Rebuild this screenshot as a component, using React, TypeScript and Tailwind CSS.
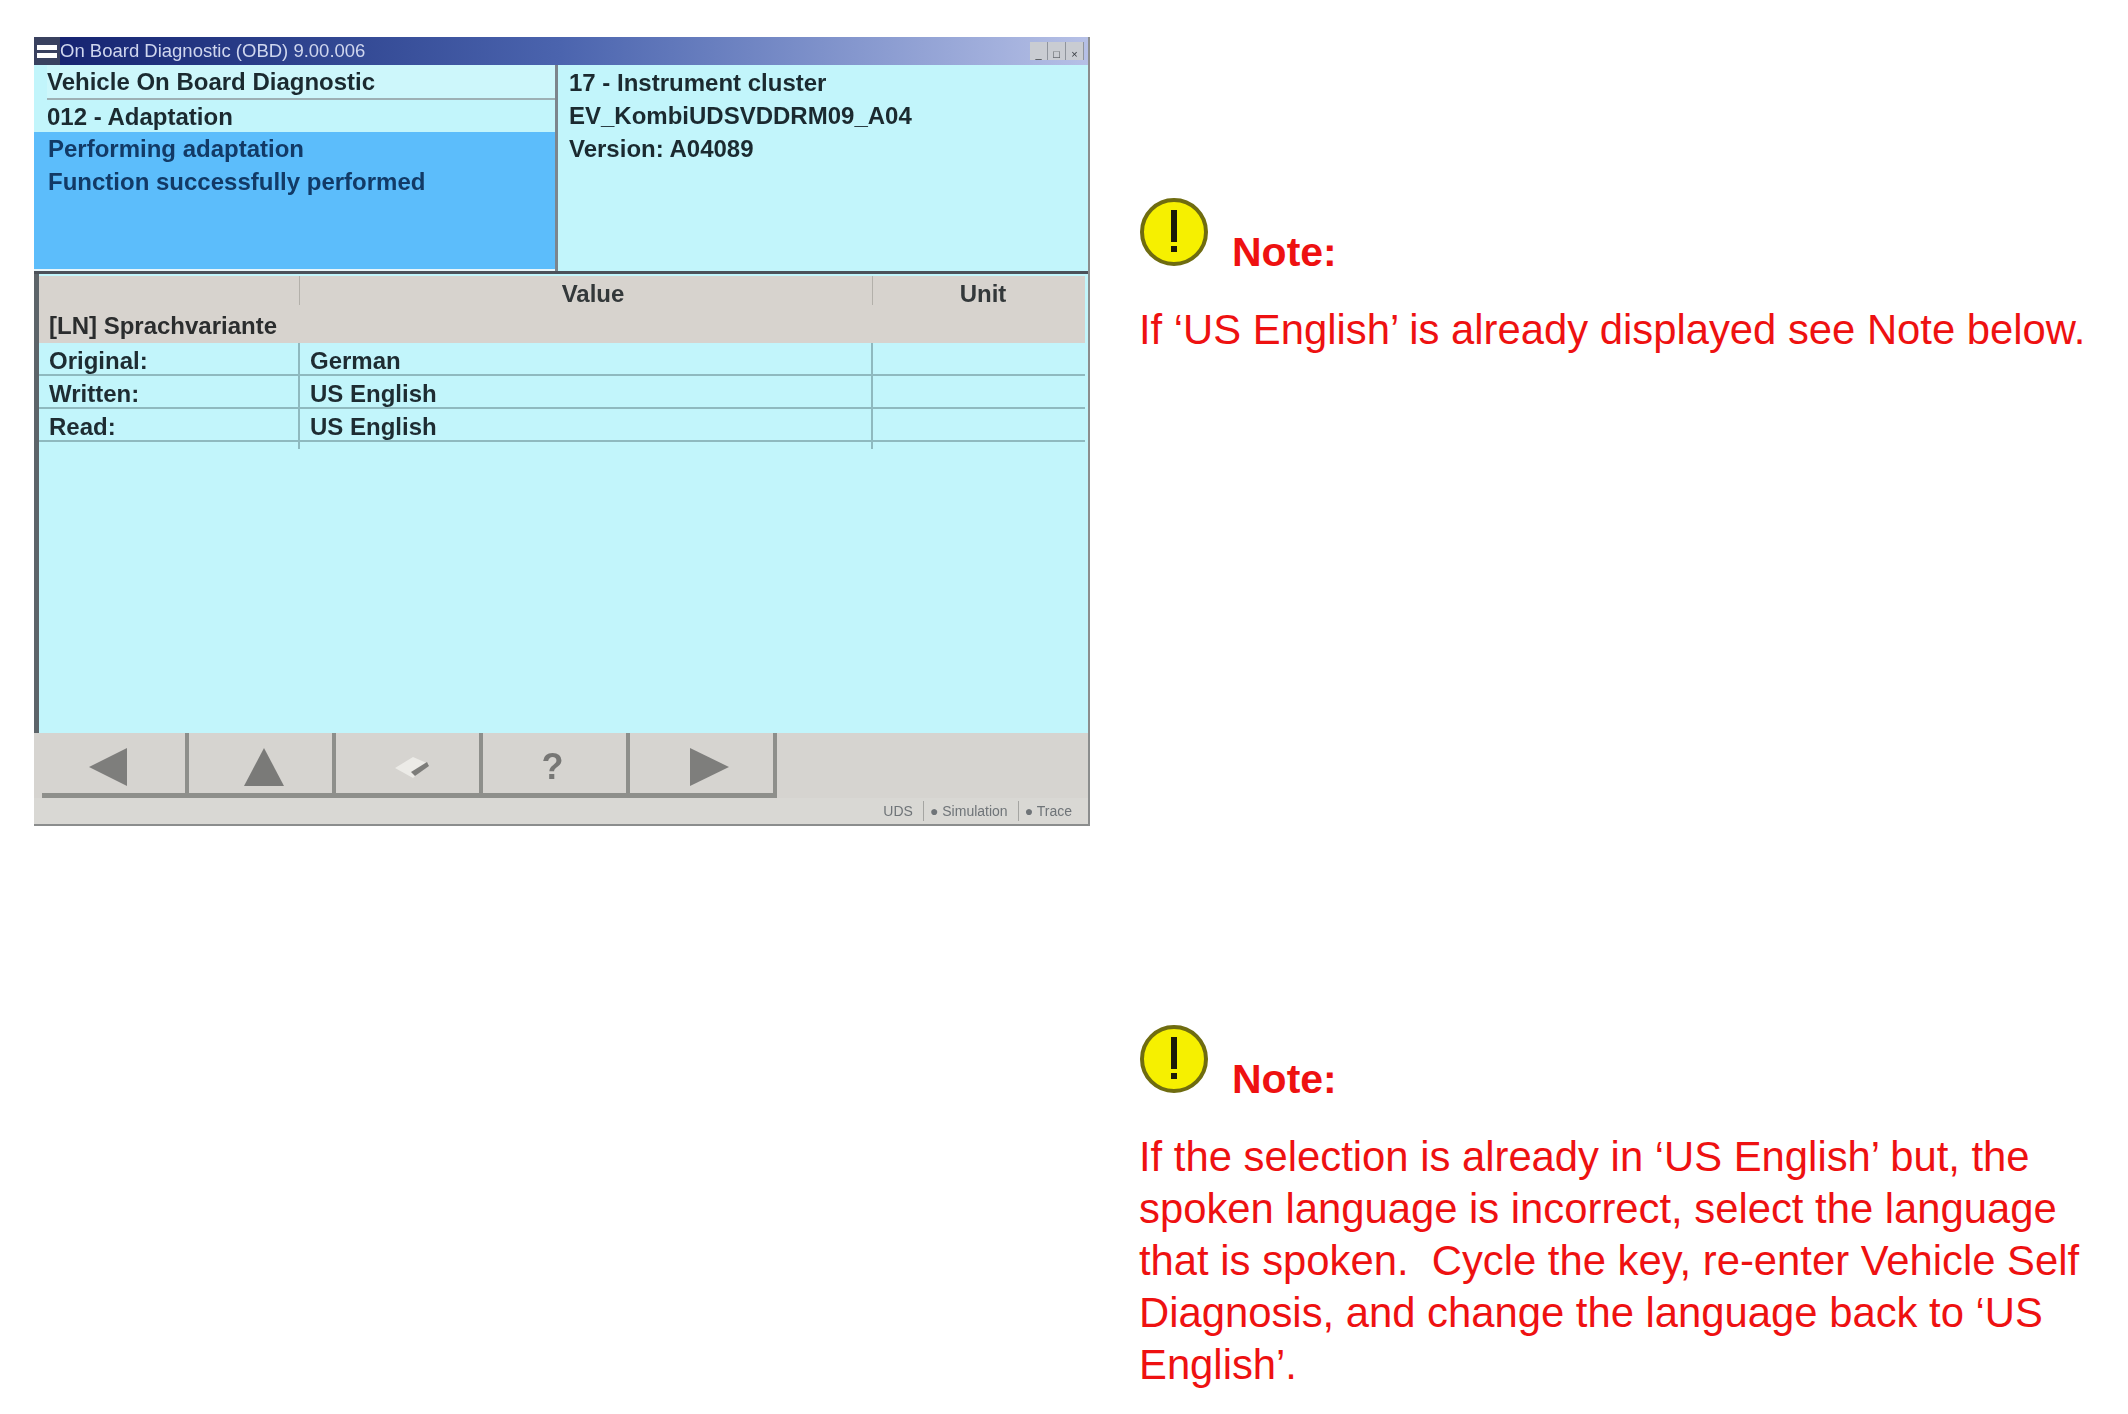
import { ReactNode } from "react";

const FONT = "font-['Liberation_Sans',Arial,sans-serif]";

const ROWS = [
  { label: "Original:", value: "German" },
  { label: "Written:", value: "US English" },
  { label: "Read:", value: "US English" },
];

function TitleButton({ children }: { children: ReactNode }) {
  return (
    <div className="flex h-[18px] w-[18px] items-end justify-center border-r border-[#8f949c] bg-[#c9ccd2] text-[11px] leading-none text-[#34383e]">
      {children}
    </div>
  );
}

function ToolButton({ children }: { children: ReactNode }) {
  return (
    <div className="flex h-[60px] w-[147px] items-center justify-center border-r-[4px] border-[#8e8f8b] bg-[#d6d4d0] pt-[8px]">
      {children}
    </div>
  );
}

/** Scanned OBD window, the soft edges come from the jpeg in the original */
function ObdWindow() {
  return (
    <div className="flex h-[789px] w-[1056px] shrink-0 flex-col border-r-2 border-b-2 border-[#8b8d8d] blur-[0.7px]">
      {/* Title bar */}
      <div className="flex h-[28px] shrink-0 items-center bg-gradient-to-r from-[#14206e] via-[#4b64ae] to-[#b6c0e6] pr-1">
        <div className="flex h-full w-[26px] flex-col justify-center gap-[3px] bg-[#39415f] px-[3px]">
          <div className="h-[5px] bg-white" />
          <div className="h-[5px] bg-white" />
        </div>
        <span className="text-[18.5px] text-[#cfd6ee]">On Board Diagnostic (OBD) 9.00.006</span>
        <div className="ml-auto flex">
          <TitleButton>_</TitleButton>
          <TitleButton>□</TitleButton>
          <TitleButton>×</TitleButton>
        </div>
      </div>

      {/* Top panes */}
      <div className="flex h-[209px] shrink-0 border-b-[3px] border-[#4c5159] bg-[#c2f5fb] text-[24px] leading-[33px] font-bold text-[#1b2a30]">
        <div className="flex w-[524px] shrink-0 flex-col border-r-[3px] border-[#7c858c] pl-[13px]">
          <div className="flex h-[35px] items-end border-b-2 border-[#9db0b4] bg-[#cdf7fb]">Vehicle On Board Diagnostic</div>
          <div className="flex h-[32px] items-center">012 - Adaptation</div>
          <div className="-ml-[13px] flex-1 bg-[#5cbdfb] pl-[14px] text-[#123a66]">
            <div>Performing adaptation</div>
            <div>Function successfully performed</div>
          </div>
          <div className="-ml-[13px] h-[2px] bg-[#e8f6fa]" />
        </div>
        <div className="flex-1 pt-[1px] pl-[11px]">
          <div>17 - Instrument cluster</div>
          <div>EV_KombiUDSVDDRM09_A04</div>
          <div>Version: A04089</div>
        </div>
      </div>

      {/* Table */}
      <div className="flex flex-1 flex-col border-l-[5px] border-[#5d6469] bg-[#c2f5fb] text-[24px] font-bold text-[#1e2c32]">
        <div className="mt-[2px] mr-[3px] grid h-[29px] grid-cols-[261px_573px_1fr] bg-[#d7d3ce] pb-[3px] text-[#33383a]">
          <div className="border-r border-[#b3b0aa]" />
          <div className="flex items-center justify-center border-r border-[#b3b0aa] pl-[14px]">Value</div>
          <div className="flex items-center justify-center pl-[8px]">Unit</div>
        </div>
        <div className="mr-[3px] flex h-[38px] items-center bg-[#d7d3ce] pt-[3px] pl-[10px] text-[#2b2d2e]">[LN] Sprachvariante</div>
        {ROWS.map((row) => (
          <div key={row.label} className="mr-[3px] grid h-[33px] grid-cols-[261px_573px_1fr] border-b-2 border-[#8fb9bf]">
            <div className="flex items-center border-r-2 border-[#8fb9bf] pb-[4px] pl-[10px]">{row.label}</div>
            <div className="flex items-center border-r-2 border-[#8fb9bf] pb-[4px] pl-[10px]">{row.value}</div>
            <div />
          </div>
        ))}
      </div>

      {/* Toolbar */}
      <div className="flex h-[65px] shrink-0 bg-[#d6d4d0] pl-[8px]">
        <div className="box-content flex h-[60px] border-b-[5px] border-[#8e8f8b]">
          <ToolButton>
            <svg width="40" height="40" viewBox="0 0 40 40" className="-ml-[10px]"><polygon points="0,20 38,1 38,39" fill="#7e7e7c" /></svg>
          </ToolButton>
          <ToolButton>
            <svg width="42" height="40" viewBox="0 0 42 40" className="ml-[6px]"><polygon points="21,1 41,39 1,39" fill="#7a7a78" /></svg>
          </ToolButton>
          <ToolButton>
            <svg width="38" height="30" viewBox="0 0 38 30" className="ml-[8px]">
              <polygon points="2,16 20,5 36,12 20,26" fill="#ecebe7" />
              <polygon points="18,20 34,10 36,14 22,24" fill="#7d7d7a" />
            </svg>
          </ToolButton>
          <ToolButton>
            <span className="-ml-[4px] text-[36px] leading-none font-bold text-[#777775]">?</span>
          </ToolButton>
          <ToolButton>
            <svg width="42" height="40" viewBox="0 0 42 40" className="ml-[14px]"><polygon points="41,20 2,1 2,39" fill="#7e7e7c" /></svg>
          </ToolButton>
        </div>
      </div>

      {/* Status bar */}
      <div className="flex h-[26px] shrink-0 items-center justify-end gap-[10px] bg-[#d9d8d4] pr-[16px] text-[14px] leading-[20px] text-[#6f7478]">
        <span>UDS</span>
        <span className="border-l border-[#a5a5a2] pl-[6px]">● Simulation</span>
        <span className="border-l border-[#a5a5a2] pl-[6px]">● Trace</span>
      </div>
    </div>
  );
}

function NoteHeader() {
  return (
    <div className="flex items-end">
      <svg width="70" height="70" viewBox="0 0 70 70" className="shrink-0 blur-[0.5px]">
        <circle cx="35" cy="35" r="32" fill="#f6f000" stroke="#6f6c10" strokeWidth="4" />
        <rect x="32" y="13" width="6" height="32" fill="#1c1a08" />
        <rect x="32" y="49" width="6" height="6" fill="#1c1a08" />
      </svg>
      <span className="-mb-[9px] ml-[23px] text-[41px] leading-[47px] font-bold">Note:</span>
    </div>
  );
}

export default function App() {
  return (
    <div className={`${FONT} flex min-h-[1414px] bg-white pt-[37px] pl-[34px]`}>
      <ObdWindow />
      <div className="ml-[49px] flex flex-col text-[41.8px] leading-[52px] text-[#ee1111]">
        <div className="mt-[160px]">
          <NoteHeader />
          <p className="mt-[37px] whitespace-nowrap">If ‘US English’ is already displayed see Note below.</p>
        </div>
        <div className="mt-[668px]">
          <NoteHeader />
          <p className="mt-[37px] w-[970px]">
            If the selection is already in ‘US English’ but, the<br />
            spoken language is incorrect, select the language<br />
            that is spoken.&nbsp; Cycle the key, re-enter Vehicle Self<br />
            Diagnosis, and change the language back to ‘US<br />
            English’.
          </p>
        </div>
      </div>
    </div>
  );
}
